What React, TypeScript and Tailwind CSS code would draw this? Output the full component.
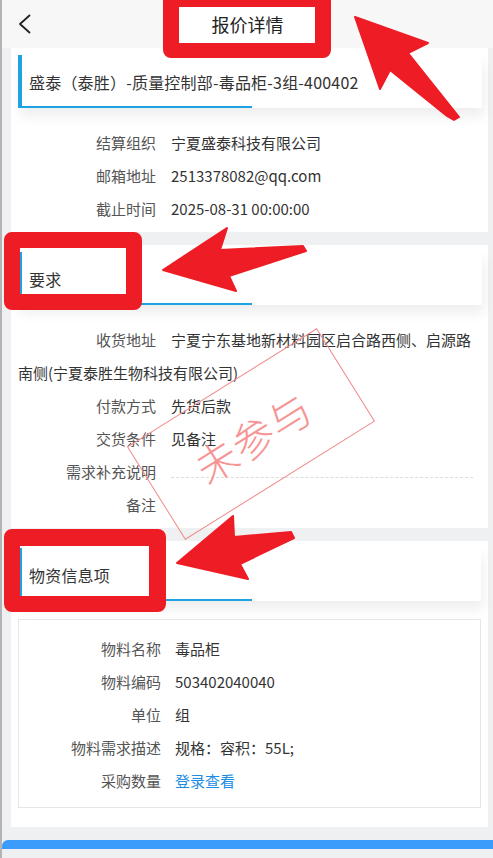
import React from "react";

type Row = { label: string; value?: React.ReactNode; dashed?: boolean };

const baseInfo: Row[] = [
  { label: "结算组织", value: "宁夏盛泰科技有限公司" },
  { label: "邮箱地址", value: "2513378082@qq.com" },
  { label: "截止时间", value: "2025-08-31 00:00:00" },
];

const demands: Row[] = [
  { label: "收货地址", value: "宁夏宁东基地新材料园区启合路西侧、启源路南侧(宁夏泰胜生物科技有限公司)" },
  { label: "付款方式", value: "先货后款" },
  { label: "交货条件", value: "见备注" },
  { label: "需求补充说明", dashed: true },
  { label: "备注" },
];

const materials: Row[] = [
  { label: "物料名称", value: "毒品柜" },
  { label: "物料编码", value: "503402040040" },
  { label: "单位", value: "组" },
  { label: "物料需求描述", value: "规格：容积：55L;" },
  { label: "采购数量", value: <span className="text-[#1e8ce3]">登录查看</span> },
];

function SectionHead({ title }: { title: string }) {
  return (
    <div className="relative flex h-[53px] items-center border-l-4 border-[#1fa2e1] bg-white pl-[7px] text-[16px] tracking-[0.2px] text-[#333] shadow-[2px_8px_12px_rgba(0,0,0,0.07)]">
      {title}
      <span className="absolute bottom-0 left-0 h-[2px] w-[230px] bg-[#1fa2e1]" />
    </div>
  );
}

function InfoRows({ rows, labelW, gap }: { rows: Row[]; labelW: string; gap: string }) {
  return (
    <div className="text-[15px] leading-[33px]">
      {rows.map((r) => (
        <div key={r.label}>
          <span className={`inline-block text-right text-[#555] ${labelW} ${gap}`}>{r.label}</span>
          {r.dashed ? (
            <span className="inline-block h-[1px] w-[302px] translate-y-[4px] border-t border-dashed border-[#dcdcdc] align-middle" />
          ) : (
            <span className="text-[#333]">{r.value}</span>
          )}
        </div>
      ))}
    </div>
  );
}

export default function App() {
  return (
    <div className="relative min-h-[858px] w-[493px] overflow-hidden border-l-2 border-[#b4b4b4] bg-[#eff0f2] font-['Noto_Sans_CJK_SC',sans-serif]">
      {/* top bar */}
      <header className="flex h-12 items-center bg-[#f7f7f7]">
        <button className="flex h-12 w-[45px] items-center justify-center">
          <svg width="14" height="20" viewBox="0 0 14 20" fill="none">
            <polyline points="12,1 2,10 12,19" stroke="#222" strokeWidth="1.8" strokeLinejoin="round" />
          </svg>
        </button>
        <h1 className="relative z-10 flex-1 text-center text-[18px] text-[#222]">报价详情</h1>
        <span className="w-[45px]" />
      </header>

      {/* basic */}
      <section className="ml-[9px] mr-[5px] bg-white pb-[7px] pl-[7px] pr-[6px] pt-[7px]">
        <SectionHead title="盛泰（泰胜）-质量控制部-毒品柜-3组-400402" />
        <div className="mt-[18px]">
          <InfoRows rows={baseInfo} labelW="w-[138px]" gap="mr-[15px]" />
        </div>
      </section>

      {/* demands */}
      <section className="relative ml-[9px] mr-[5px] mt-[13px] bg-white pb-[7px] pl-[7px] pr-[6px] pt-[7px]">
        <SectionHead title="要求" />
        <div className="mt-[18px]">
          <InfoRows rows={demands} labelW="w-[138px]" gap="mr-[15px]" />
        </div>
        <div className="absolute left-[128px] top-[134px] flex h-[110px] w-[224px] rotate-[-32deg] items-center justify-center border border-[#f28c8c]">
          <span className="translate-y-[2px] text-[42px] font-light tracking-[1px] text-[#f69393]">未参与</span>
        </div>
      </section>

      {/* materials */}
      <section className="ml-[9px] mr-[5px] mt-[13px] bg-white pb-[19px] pl-[7px] pr-[7px] pt-[7px]">
        <SectionHead title="物资信息项" />
        <div className="mt-[18px] border border-[#e6e6e6] pb-[10px] pt-[12px]">
          <InfoRows rows={materials} labelW="w-[142px]" gap="mr-[14px]" />
        </div>
      </section>

      <div className="mt-[13px] h-[9px] rounded-tl-md bg-[#3c9cfc]" />

      {/* annotations */}
      <div className="absolute left-[161px] top-0 h-[58px] w-[168px] rounded-b-lg border-x-[16px] border-b-[15px] border-t-[7px] border-[#ee1c25] bg-white" />
      <div className="absolute left-[2px] top-[232px] h-[78px] w-[138px] rounded-lg border-[16px] border-[#ee1c25]" />
      <div className="absolute left-[2px] top-[529px] h-[83px] w-[162px] rounded-lg border-b-[16px] border-l-[16px] border-r-[17px] border-t-[17px] border-[#ee1c25]" />
      <svg className="pointer-events-none absolute left-[-2px] top-0" width="493" height="858">
        <g fill="#ee1c25" stroke="#ee1c25" strokeWidth="2" strokeLinejoin="round">
          <polygon points="355,17 428,43 408,53 459,117 454,120 447,116 390,70 380,89" />
          <polygon points="163,270 227,228 220,250 303,246 306,251 229,276 236,291" />
          <polygon points="177,563 233,516 234,537 291,532 294,538 240,564 248,579" />
        </g>
      </svg>
    </div>
  );
}
